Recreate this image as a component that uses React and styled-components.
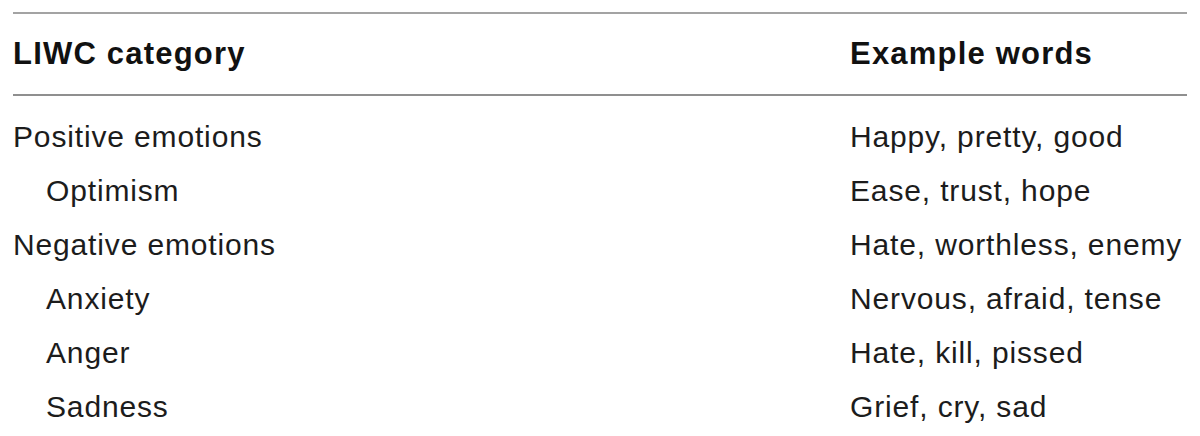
import React from 'react'
import styled, { createGlobalStyle } from 'styled-components'

const GlobalStyle = createGlobalStyle`
  body {
    margin: 0;
    background: #ffffff;
    font-family: "Liberation Sans", Arial, Helvetica, sans-serif;
    color: #1c1c1c;
  }
`

const rows = [
  { category: 'Positive emotions', words: 'Happy, pretty, good' },
  { category: 'Optimism', words: 'Ease, trust, hope', sub: true },
  { category: 'Negative emotions', words: 'Hate, worthless, enemy' },
  { category: 'Anxiety', words: 'Nervous, afraid, tense', sub: true },
  { category: 'Anger', words: 'Hate, kill, pissed', sub: true },
  { category: 'Sadness', words: 'Grief, cry, sad', sub: true }
]

function App () {
  return (
    <>
      <GlobalStyle />
      <Table>
        <Head>
          <HeadCell>LIWC category</HeadCell>
          <HeadCell>Example words</HeadCell>
        </Head>
        <Body>
          {rows.map((row) => (
            <Row key={row.category}>
              <Cell $sub={row.sub}>{row.category}</Cell>
              <Cell>{row.words}</Cell>
            </Row>
          ))}
        </Body>
      </Table>
    </>
  )
}

const Table = styled.div`
  margin: 12px 13px 0 13px;
  border-top: 2px solid #a3a3a3;
`

const Head = styled.div`
  display: grid;
  grid-template-columns: 837px 1fr;
  height: 80px;
  border-bottom: 2px solid #8f8f8f;
`

const HeadCell = styled.div`
  font-size: 31px;
  line-height: 80px;
  font-weight: 700;
  color: #111111;
  letter-spacing: 1.2px;
  white-space: nowrap;
`

const Body = styled.div`
  padding-top: 14px;
`

const Row = styled.div`
  display: grid;
  grid-template-columns: 837px 1fr;
  height: 54px;
`

const Cell = styled.div`
  font-size: 30px;
  line-height: 54px;
  letter-spacing: 0.85px;
  white-space: nowrap;
  padding-left: ${(p) => (p.$sub ? '33px' : '0')};
`

export default App
